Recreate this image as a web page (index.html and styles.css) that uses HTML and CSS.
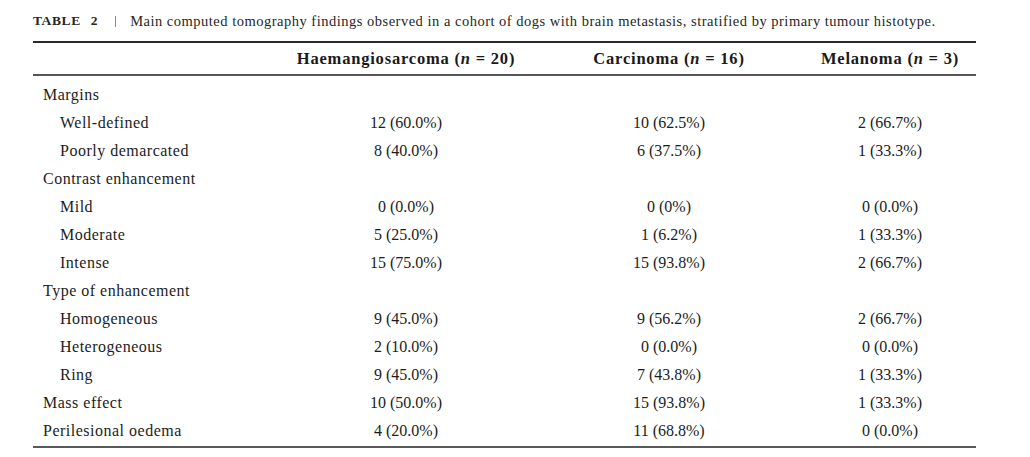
FILE: index.html
```html
<!DOCTYPE html>
<html lang="en">
<head>
<meta charset="utf-8">
<title>Table 2</title>
<link rel="stylesheet" href="styles.css">
</head>
<body>
<div class="page">
  <p class="caption"><span class="label">TABLE</span><span class="label num">2</span><span class="sep"></span><span class="title">Main computed tomography findings observed in a cohort of dogs with brain metastasis, stratified by primary tumour histotype.</span></p>
  <div class="table">
    <div class="row head">
      <div class="cell name"></div>
      <div class="cell val">Haemangiosarcoma (<i>n</i> = 20)</div>
      <div class="cell val">Carcinoma (<i>n</i> = 16)</div>
      <div class="cell val">Melanoma (<i>n</i> = 3)</div>
    </div>
    <div class="body">
      <div class="row"><div class="cell name">Margins</div><div class="cell val"></div><div class="cell val"></div><div class="cell val"></div></div>
      <div class="row"><div class="cell name sub">Well-defined</div><div class="cell val">12 (60.0%)</div><div class="cell val">10 (62.5%)</div><div class="cell val">2 (66.7%)</div></div>
      <div class="row"><div class="cell name sub">Poorly demarcated</div><div class="cell val">8 (40.0%)</div><div class="cell val">6 (37.5%)</div><div class="cell val">1 (33.3%)</div></div>
      <div class="row"><div class="cell name">Contrast enhancement</div><div class="cell val"></div><div class="cell val"></div><div class="cell val"></div></div>
      <div class="row"><div class="cell name sub">Mild</div><div class="cell val">0 (0.0%)</div><div class="cell val">0 (0%)</div><div class="cell val">0 (0.0%)</div></div>
      <div class="row"><div class="cell name sub">Moderate</div><div class="cell val">5 (25.0%)</div><div class="cell val">1 (6.2%)</div><div class="cell val">1 (33.3%)</div></div>
      <div class="row"><div class="cell name sub">Intense</div><div class="cell val">15 (75.0%)</div><div class="cell val">15 (93.8%)</div><div class="cell val">2 (66.7%)</div></div>
      <div class="row"><div class="cell name">Type of enhancement</div><div class="cell val"></div><div class="cell val"></div><div class="cell val"></div></div>
      <div class="row"><div class="cell name sub">Homogeneous</div><div class="cell val">9 (45.0%)</div><div class="cell val">9 (56.2%)</div><div class="cell val">2 (66.7%)</div></div>
      <div class="row"><div class="cell name sub">Heterogeneous</div><div class="cell val">2 (10.0%)</div><div class="cell val">0 (0.0%)</div><div class="cell val">0 (0.0%)</div></div>
      <div class="row"><div class="cell name sub">Ring</div><div class="cell val">9 (45.0%)</div><div class="cell val">7 (43.8%)</div><div class="cell val">1 (33.3%)</div></div>
      <div class="row"><div class="cell name">Mass effect</div><div class="cell val">10 (50.0%)</div><div class="cell val">15 (93.8%)</div><div class="cell val">1 (33.3%)</div></div>
      <div class="row"><div class="cell name">Perilesional oedema</div><div class="cell val">4 (20.0%)</div><div class="cell val">11 (68.8%)</div><div class="cell val">0 (0.0%)</div></div>
    </div>
  </div>
</div>
</body>
</html>
```

FILE: styles.css
```css
html, body {
  margin: 0;
  padding: 0;
  background: #ffffff;
}

body {
  font-family: "Liberation Serif", "Times New Roman", serif;
  color: #1c1c1c;
  width: 1030px;
  height: 457px;
  overflow: hidden;
}

.page {
  padding: 11px 54px 0 33px;
}

.caption {
  margin: 0;
  height: 20px;
  line-height: 20px;
  font-size: 14.5px;
  letter-spacing: 0.5px;
  color: #262626;
  white-space: nowrap;
  display: flex;
  align-items: center;
}

.caption .label {
  font-weight: bold;
  font-size: 13.5px;
  letter-spacing: 0.6px;
}

.caption .label.num {
  margin-left: 10px;
}

.caption .sep {
  display: inline-block;
  width: 1px;
  height: 11px;
  background: #8a8a8a;
  margin: 0 14px 0 17px;
}

.table {
  margin-top: 10px;
  border-top: 2px solid #2a2a2a;
  border-bottom: 2px solid #5a5a5a;
}

.row {
  display: grid;
  grid-template-columns: 257px 232px 294px 148px 12px;
  height: 28px;
  line-height: 28px;
  font-size: 16px;
}

.row::after {
  content: "";
}

.head {
  height: 31px;
  line-height: 31px;
  font-size: 16.5px;
  font-weight: bold;
  letter-spacing: 0.8px;
  border-bottom: 2px solid #555555;
  color: #1a1a1a;
}

.head i {
  font-style: italic;
}

.body {
  padding: 5px 0 1px;
}

.cell {
  white-space: nowrap;
}

.name {
  padding-left: 10px;
  letter-spacing: 0.5px;
}

.name.sub {
  padding-left: 27px;
}

.val {
  text-align: center;
}
```
